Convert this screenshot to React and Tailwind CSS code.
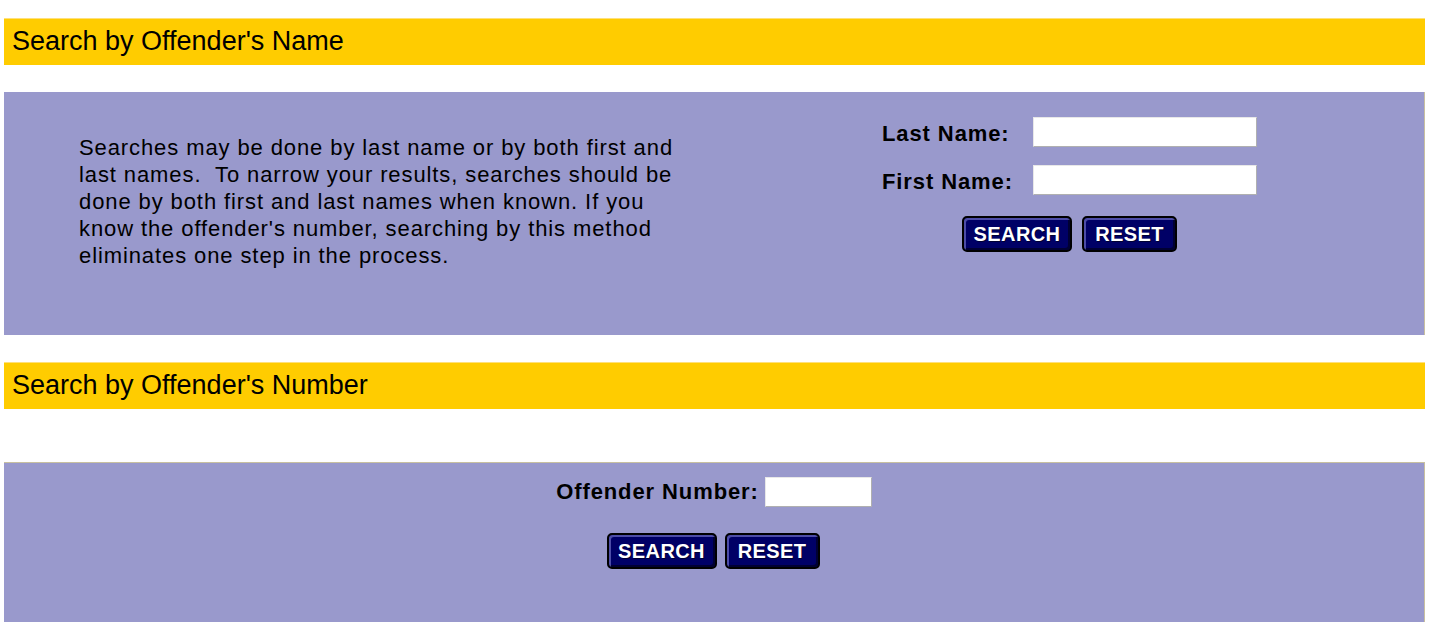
import React from "react";

const NavButton = ({ children, width }) => (
  <button
    className={`${width} h-[36px] rounded-[5px] border-2 border-black bg-[#000066] text-white font-bold text-[20px] tracking-[0.4px] leading-none shadow-[inset_2px_2px_0_rgba(140,140,220,0.55),inset_-2px_-2px_0_rgba(0,0,30,0.7)] [text-shadow:1px_1px_0_#000033]`}
  >
    {children}
  </button>
);

const SectionHeader = ({ title }) => (
  <div className="bg-[#ffcc00] border-t border-[#ffe07a] h-[47px] flex items-center pl-2 pb-[2px] text-[27px] text-black">
    {title}
  </div>
);

const fieldClass =
  "h-[30px] bg-white border border-[#b0b0b0] border-t-[#e8e8e8] border-l-[#e8e8e8]";

export default function App() {
  return (
    <div className="bg-white min-h-[622px] pl-1 pr-[5px] pt-[18px] font-['Liberation_Sans',Arial,sans-serif] overflow-hidden">
      <SectionHeader title="Search by Offender's Name" />

      {/* name search */}
      <div className="mt-[27px] bg-[#9999cc] border-r border-[#c8c0a0] h-[243px] flex">
        <div className="w-[640px] ml-[75px] pt-[42px] text-[22px] tracking-[0.9px] leading-[27px] text-black whitespace-nowrap">
          Searches may be done by last name or by both first and
          <br />
          last names.&nbsp; To narrow your results, searches should be
          <br />
          done by both first and last names when known. If you
          <br />
          know the offender's number, searching by this method
          <br />
          eliminates one step in the process.
        </div>
        <div className="ml-[163px] pt-[25px] flex flex-col">
          <div className="flex items-center h-[30px]">
            <span className="w-[151px] font-bold text-[22px] tracking-[0.9px] pt-[2px]">Last Name:</span>
            <input className={`w-[224px] ${fieldClass}`} />
          </div>
          <div className="flex items-center h-[30px] mt-[18px]">
            <span className="w-[151px] font-bold text-[22px] tracking-[0.9px] pt-[2px]">First Name:</span>
            <input className={`w-[224px] ${fieldClass}`} />
          </div>
          <div className="flex gap-[10px] mt-[21px] ml-[80px]">
            <NavButton width="w-[110px]">SEARCH</NavButton>
            <NavButton width="w-[95px]">RESET</NavButton>
          </div>
        </div>
      </div>

      <div className="mt-[27px]">
        <SectionHeader title="Search by Offender's Number" />
      </div>

      {/* number search */}
      <div className="mt-[53px] bg-[#9999cc] border-t border-r border-[#c8c0a0] h-[170px] flex flex-col items-center">
        <div className="flex items-center mt-[12px]">
          <span className="font-bold text-[22px] tracking-[0.9px] mr-[6px]">Offender Number:</span>
          <input className={`w-[107px] ${fieldClass}`} />
        </div>
        <div className="flex gap-[8px] mt-[25px] mr-[2px]">
          <NavButton width="w-[110px]">SEARCH</NavButton>
          <NavButton width="w-[95px]">RESET</NavButton>
        </div>
      </div>
    </div>
  );
}
